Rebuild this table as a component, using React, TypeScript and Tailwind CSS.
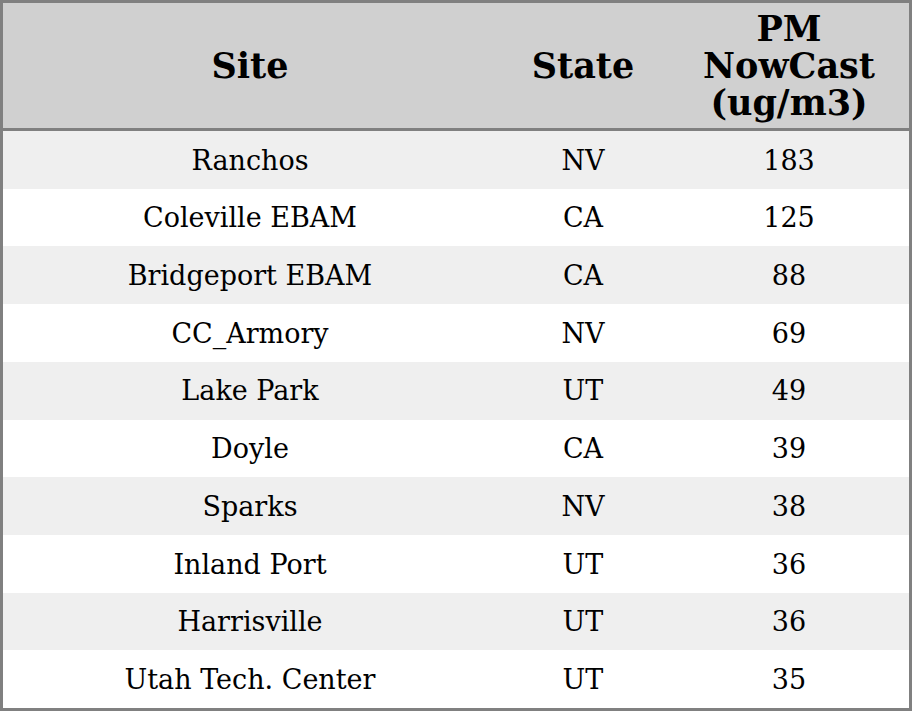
const rows = [
  { site: 'Ranchos', state: 'NV', pm: '183' },
  { site: 'Coleville EBAM', state: 'CA', pm: '125' },
  { site: 'Bridgeport EBAM', state: 'CA', pm: '88' },
  { site: 'CC_Armory', state: 'NV', pm: '69' },
  { site: 'Lake Park', state: 'UT', pm: '49' },
  { site: 'Doyle', state: 'CA', pm: '39' },
  { site: 'Sparks', state: 'NV', pm: '38' },
  { site: 'Inland Port', state: 'UT', pm: '36' },
  { site: 'Harrisville', state: 'UT', pm: '36' },
  { site: 'Utah Tech. Center', state: 'UT', pm: '35' },
];

export default function App() {
  return (
    <div
      className="flex h-[711px] w-[912px] flex-col border-[3px] border-[#808080] bg-white text-black"
      style={{ fontFamily: '"DejaVu Serif", serif' }}
    >
      {/* Header */}
      <div className="flex h-[128px] shrink-0 border-b-[3px] border-[#808080] bg-[#d0d0d0] text-[35px] font-bold leading-[37px]">
        <div className="flex w-[494px] items-center justify-center">Site</div>
        <div className="flex w-[172px] items-center justify-center">State</div>
        <div className="flex flex-1 items-center justify-center text-center">
          PM
          <br />
          NowCast
          <br />
          (ug/m3)
        </div>
      </div>

      {/* Rows */}
      {rows.map((r, i) => (
        <div
          key={r.site}
          className={`flex flex-1 items-center pt-[2px] text-[27px] ${i % 2 === 0 ? 'bg-[#efefef]' : 'bg-white'}`}
        >
          <div className="w-[494px] text-center">{r.site}</div>
          <div className="w-[172px] text-center">{r.state}</div>
          <div className="flex-1 text-center">{r.pm}</div>
        </div>
      ))}
    </div>
  );
}
